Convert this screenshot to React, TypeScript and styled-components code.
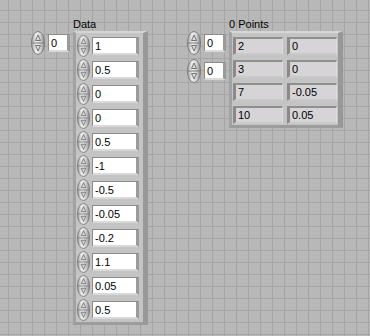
import React from 'react';
import styled, { createGlobalStyle } from 'styled-components';

const GlobalStyle = createGlobalStyle`
  html, body {
    margin: 0;
    padding: 0;
  }
  body {
    width: 370px;
    height: 336px;
    overflow: hidden;
    background-color: #b8b8b8;
    background-image:
      linear-gradient(to right, #a5a5a5 1px, transparent 1px),
      linear-gradient(to bottom, #a5a5a5 1px, transparent 1px);
    background-size: 12px 12px;
    background-position: 8px 10px;
    font-family: "Liberation Sans", Arial, sans-serif;
  }
`;

const Panel = styled.div`
  display: flex;
  align-items: flex-start;
  padding: 17px 0 0 31px;
  box-sizing: border-box;
  height: 336px;
`;

const ArrayBlock = styled.div<{ $offset?: number }>`
  display: grid;
  grid-template-columns: auto auto;
  grid-template-rows: 14px auto;
  column-gap: 3px;
  margin-left: ${p => p.$offset ?? 0}px;
`;

const Label = styled.div`
  grid-column: 2;
  grid-row: 1;
  font-size: 11px;
  line-height: 14px;
  color: #000;
  white-space: nowrap;
`;

const IndexStack = styled.div`
  grid-column: 1;
  grid-row: 2;
  display: flex;
  flex-direction: column;
  gap: 4px;
`;

const NumControl = styled.div`
  display: flex;
  align-items: center;
  gap: 3px;
  height: 24px;
`;

const ValueBox = styled.div<{ $width: number; $indicator?: boolean }>`
  box-sizing: border-box;
  width: ${p => p.$width}px;
  height: 18px;
  display: flex;
  align-items: center;
  padding-left: 2px;
  font-size: 11px;
  color: #000;
  background: ${p => (p.$indicator ? '#d6d4d6' : '#ffffff')};
  border-style: solid;
  border-width: ${p => (p.$indicator ? '2px 1px 2px 3px' : '1px 3px 2px 1px')};
  border-color: ${p =>
    p.$indicator
      ? '#8f8f8f #dedede #c9c9c9 #8a8a8a'
      : '#8c8c8c #9a9a9a #dadada #8c8c8c'};
`;

const ArrayFrame = styled.div`
  grid-column: 2;
  grid-row: 2;
  box-sizing: border-box;
  background: #c4c4c4;
  border-style: solid;
  border-width: 2px 5px 3px 3px;
  border-color: #d6d6d6 #989898 #9c9c9c #a2a2a2;
`;

const ElementList = styled(ArrayFrame)`
  padding: 1px 4px 0 1px;
`;

const ElementRow = styled.div`
  display: flex;
  align-items: center;
  gap: 2px;
  height: 24px;
`;

const MatrixFrame = styled(ArrayFrame)`
  display: grid;
  grid-template-columns: 50px 50px;
  grid-auto-rows: 18px;
  column-gap: 4px;
  row-gap: 5px;
  padding: 4px 1px 1px 1px;
`;

function Spinner({ width = 14, height = 24 }: { width?: number; height?: number }) {
  return (
    <svg width={width} height={height} viewBox="0 0 14 24" preserveAspectRatio="none">
      <defs>
        <linearGradient id="spin" x1="0" y1="0" x2="1" y2="0">
          <stop offset="0" stopColor="#9c9c9c" />
          <stop offset="0.35" stopColor="#efefef" />
          <stop offset="0.7" stopColor="#d0d0d0" />
          <stop offset="1" stopColor="#858585" />
        </linearGradient>
      </defs>
      <ellipse cx="7" cy="12" rx="6.5" ry="11.5" fill="url(#spin)" stroke="#7c7c7c" strokeWidth="1" />
      <line x1="1" y1="12" x2="13" y2="12" stroke="#7e7e7e" strokeWidth="1" />
      <path d="M4.5 9.5 L7 4 L9.5 9.5 Z" fill="#dcdcdc" stroke="#6a6a6a" strokeWidth="0.9" />
      <path d="M4.5 14.5 L7 20 L9.5 14.5 Z" fill="#dcdcdc" stroke="#6a6a6a" strokeWidth="0.9" />
    </svg>
  );
}

function IndexControl({ value }: { value: string }) {
  return (
    <NumControl>
      <Spinner />
      <ValueBox $width={22}>{value}</ValueBox>
    </NumControl>
  );
}

const dataValues = ['1', '0.5', '0', '0', '0.5', '-1', '-0.5', '-0.05', '-0.2', '1.1', '0.05', '0.5'];

const points = [
  ['2', '0'],
  ['3', '0'],
  ['7', '-0.05'],
  ['10', '0.05'],
];

export default function App() {
  return (
    <>
      <GlobalStyle />
      <Panel>
        <ArrayBlock>
          <Label>Data</Label>
          <IndexStack>
            <IndexControl value="0" />
          </IndexStack>
          <ElementList>
            {dataValues.map((v, i) => (
              <ElementRow key={i}>
                <Spinner width={13} height={22} />
                <ValueBox $width={47}>{v}</ValueBox>
              </ElementRow>
            ))}
          </ElementList>
        </ArrayBlock>

        <ArrayBlock $offset={39}>
          <Label>0 Points</Label>
          <IndexStack>
            <IndexControl value="0" />
            <IndexControl value="0" />
          </IndexStack>
          <MatrixFrame>
            {points.flat().map((v, i) => (
              <ValueBox key={i} $width={50} $indicator>
                {v}
              </ValueBox>
            ))}
          </MatrixFrame>
        </ArrayBlock>
      </Panel>
    </>
  );
}
